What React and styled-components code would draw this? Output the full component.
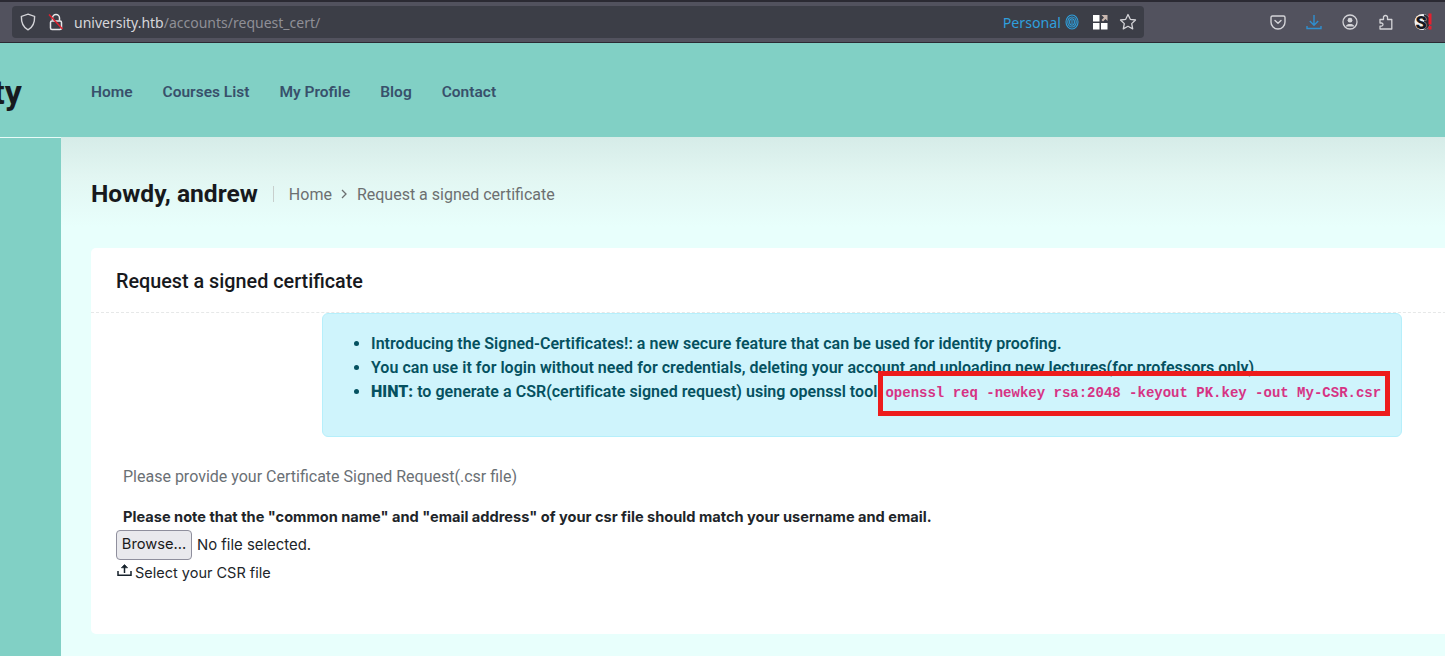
import React from 'react';
import styled, { createGlobalStyle } from 'styled-components';

const GlobalStyle = createGlobalStyle`
  html, body {
    margin: 0;
    height: 100%;
    overflow: hidden;
    background: #e8fffc;
  }
  * {
    box-sizing: border-box;
  }
  body {
    font-family: Roboto, "Liberation Sans", sans-serif;
  }
`;

const Page = styled.div`
  width: 1445px;
  height: 656px;
  overflow: hidden;
  display: flex;
  flex-direction: column;
`;

/* browser chrome */
const Toolbar = styled.div`
  height: 43px;
  flex: none;
  display: flex;
  align-items: center;
  padding: 0 13px 0 12px;
  background: #52525e;
  border-top: 2px solid #2b2a33;
  border-bottom: 1px solid #2b2a33;
`;

const UrlBar = styled.div`
  width: 1132px;
  height: 32px;
  flex: none;
  display: flex;
  align-items: center;
  padding: 0 7px 0 8px;
  background: #3c3e47;
  border-radius: 4px;
`;

const UrlIcon = styled.span`
  display: flex;
  flex: none;
  width: ${(p) => p.$w || 20}px;
  margin-left: ${(p) => p.$ml || 0}px;
  margin-right: ${(p) => p.$mr || 0}px;
  justify-content: center;
`;

const UrlText = styled.div`
  font-family: "Noto Sans", sans-serif;
  font-size: 14px;
  color: #d6d6da;
  span {
    color: #8f8f96;
  }
`;

const Personal = styled.div`
  margin-left: auto;
  display: flex;
  align-items: center;
  gap: 4px;
  font-family: "Noto Sans", sans-serif;
  font-size: 14.2px;
  color: #2f9fdc;
`;

const ToolIcons = styled.div`
  margin-left: auto;
  display: flex;
  align-items: center;
  gap: 20px;
`;

/* site header */
const Header = styled.header`
  height: 94px;
  flex: none;
  display: flex;
  align-items: center;
  padding-top: 3px;
  background: #81d0c5;
`;

const LogoClip = styled.div`
  width: 22px;
  margin-right: 69px;
  overflow: hidden;
  display: flex;
  justify-content: flex-end;
  font-size: 34px;
  font-weight: 700;
  color: #171a1f;
  white-space: nowrap;
`;

const Nav = styled.nav`
  display: flex;
  gap: 30px;
`;

const NavLink = styled.a`
  font-size: 15.5px;
  font-weight: 600;
  font-family: Roboto, sans-serif;
  color: #38506b;
`;

const Body = styled.div`
  flex: 1;
  display: flex;
`;

const Sidebar = styled.aside`
  width: 61px;
  flex: none;
  background: #81d0c5;
  border-top: 1px solid #e8fbf8;
`;

const Main = styled.main`
  flex: 1;
  padding: 41px 0 0 30px;
  background: linear-gradient(180deg, #d6ece8 0, #e2f6f2 40px, #e8fffc 90px);
`;

const PageHead = styled.div`
  display: flex;
  align-items: center;
  height: 32px;
`;

const Howdy = styled.h1`
  margin: 0;
  font-size: 24.6px;
  font-weight: 700;
  color: #17191d;
  line-height: 32px;
`;

const Crumbs = styled.div`
  margin-left: 15px;
  padding-left: 15px;
  display: flex;
  align-items: center;
  gap: 8px;
  height: 16px;
  font-size: 16px;
  color: #6c6f70;
  border-left: 1px solid #c8cfcd;
`;

const Card = styled.section`
  width: 1380px;
  height: 386px;
  margin-top: 38px;
  background: #fff;
  border-radius: 5px;
`;

const CardHead = styled.div`
  height: 65px;
  display: flex;
  align-items: center;
  padding: 2px 25px 0;
  border-bottom: 1px dashed #e6e8e8;
`;

const CardTitle = styled.h2`
  margin: 0;
  font-size: 19.8px;
  font-weight: 500;
  color: #17191d;
`;

const Alert = styled.div`
  width: 1080px;
  height: 124px;
  margin: 0 0 0 231px;
  padding: 18px 0 0 0;
  background: #cff4fc;
  border: 1px solid #b6effb;
  border-radius: 6px;
  color: #055160;
`;

const AlertList = styled.ul`
  margin: 0;
  padding: 0 0 0 48px;
`;

const AlertItem = styled.li`
  font-size: 16px;
  font-weight: 600;
  line-height: 24px;
  letter-spacing: 0.03px;
`;

const Code = styled.code`
  position: relative;
  display: inline-block;
  margin-left: 4px;
  font-family: "Liberation Mono", monospace;
  font-size: 14px;
  font-weight: 700;
  letter-spacing: 0;
  color: #d63384;
  line-height: 24px;

  /* red annotation box drawn over the screenshot */
  &::after {
    content: '';
    position: absolute;
    top: -10px;
    left: -7px;
    right: -9px;
    bottom: -11px;
    border: 5px solid #ed1c1c;
  }
`;

const Form = styled.div`
  padding: 28px 0 0 25px;
`;

const ProvideText = styled.p`
  margin: 0 0 0 7px;
  font-size: 16px;
  line-height: 24px;
  color: #6a7075;
`;

const NoteText = styled.p`
  margin: 17px 0 0 7px;
  font-family: Inter, sans-serif;
  font-size: 14.6px;
  font-weight: 700;
  line-height: 22px;
  color: #212529;
`;

const FileRow = styled.div`
  display: flex;
  align-items: center;
  gap: 5px;
  height: 30px;
  margin-top: 2px;
  padding-bottom: 1px;
  font-family: Inter, sans-serif;
  font-size: 14.9px;
  color: #212529;
`;

const BrowseButton = styled.button`
  width: 76px;
  height: 30px;
  padding: 0 0 2px;
  margin-bottom: -1px;
  font-family: Inter, sans-serif;
  font-size: 14.7px;
  color: #1a1a1a;
  background: #e9e9ed;
  border: 1px solid #8f8f9d;
  border-radius: 4px;
`;

const SelectLabel = styled.label`
  display: flex;
  align-items: flex-start;
  gap: 3px;
  margin-top: 2px;
  font-family: Inter, sans-serif;
  font-size: 14.5px;
  line-height: 22px;
  color: #212529;
  svg {
    margin: 1px 0 0 1px;
  }
`;

const ShieldIcon = () => (
  <svg width="16" height="18" viewBox="0 0 16 18" fill="none" stroke="#d4d4d8" strokeWidth="1.4">
    <path d="M8 1.2 14.6 3.4c.2 6-1.4 10.6-6.6 13.4C2.8 14 1.200 9.400 1.400 3.400Z" />
  </svg>
);

const LockIcon = () => (
  <svg width="16" height="18" viewBox="0 0 16 18" fill="none">
    <path d="M4.500 7.500V5a3.500 3.500 0 0 1 7 0v2.500" stroke="#e8e8ea" strokeWidth="1.500" />
    <rect x="2.500" y="8" width="11" height="8.500" rx="1.500" stroke="#e8e8ea" strokeWidth="1.500" />
    <path d="M1 1.500 14.500 16" stroke="#e5202e" strokeWidth="1.500" />
  </svg>
);

const FingerprintIcon = () => (
  <svg width="14" height="16" viewBox="0 0 14 16" fill="none" stroke="#2f9fdc" strokeWidth="1.100">
    <ellipse cx="7" cy="8" rx="6" ry="7" />
    <ellipse cx="7" cy="8" rx="4.200" ry="5" />
    <ellipse cx="7" cy="8" rx="2.400" ry="3.200" />
    <path d="M7 5.800v4.400" />
  </svg>
);

const ContainersIcon = () => (
  <svg width="16" height="16" viewBox="0 0 16 16">
    <rect x="1" y="1" width="6.500" height="6.500" fill="#fff" />
    <rect x="1" y="9" width="6.500" height="6.500" fill="#fff" />
    <rect x="9" y="9" width="6.500" height="6.500" fill="#fff" />
    <path d="M9.500 1H15.500V7L13.500 5 11 7.500 9.500 6 12 3.500Z" fill="#c9b8b0" />
  </svg>
);

const StarIcon = () => (
  <svg width="18" height="18" viewBox="0 0 18 18" fill="none" stroke="#d4d4d8" strokeWidth="1.300" strokeLinejoin="round">
    <path d="M9 1.500 11.300 6.300 16.500 7 12.700 10.600 13.700 15.900 9 13.300 4.300 15.900 5.300 10.600 1.500 7 6.700 6.300Z" />
  </svg>
);

const PocketIcon = () => (
  <svg width="16" height="16" viewBox="0 0 16 16" fill="none" stroke="#d4d4d8" strokeWidth="1.400" strokeLinecap="round" strokeLinejoin="round">
    <path d="M2.500 2h11A1.500 1.500 0 0 1 15 3.500V8a7 7 0 0 1-14 0V3.500A1.500 1.500 0 0 1 2.500 2Z" />
    <path d="M5 6.500 8 9.300 11 6.500" />
  </svg>
);

const DownloadIcon = () => (
  <svg width="16" height="16" viewBox="0 0 16 16" fill="none" stroke="#2f8fd0" strokeWidth="1.400">
    <path d="M8 1v10M3.800 7 8 11.200 12.200 7M1 12v2.500h14V12" />
  </svg>
);

const AccountIcon = () => (
  <svg width="16" height="16" viewBox="0 0 16 16" fill="none" stroke="#d4d4d8" strokeWidth="1.300">
    <circle cx="8" cy="8" r="7" />
    <circle cx="8" cy="6.200" r="2.400" fill="#d4d4d8" stroke="none" />
    <path d="M3.500 12.500c1-2 2.500-2.500 4.500-2.500s3.500.5 4.500 2.500Z" fill="#d4d4d8" stroke="none" />
  </svg>
);

const PuzzleIcon = () => (
  <svg width="16" height="16" viewBox="0 0 16 16" fill="none" stroke="#d4d4d8" strokeWidth="1.300" strokeLinejoin="round">
    <path d="M5 15H13.800V5.500H9.500V4a2 2 0 0 0-2-2.500A2 2 0 0 0 5.500 4v1.500H2V9h1.500a1.600 1.600 0 0 1 1.500 1.600 1.600 1.600 0 0 1-1.500 1.600H2V15Z" />
  </svg>
);

const ShodanIcon = () => (
  <svg width="18" height="18" viewBox="0 0 18 18">
    <circle cx="8.500" cy="9" r="8" fill="#f2f2f2" />
    <path d="M10 1.200a8 8 0 0 1 0 15.600Z" fill="#2b2d38" />
    <text x="1.500" y="15.500" fontFamily="Roboto, sans-serif" fontSize="18" fontWeight="900" fill="#16181f" stroke="#f2f2f2" strokeWidth="0.600" paintOrder="stroke">S</text>
    <rect x="14.500" y="0.500" width="3" height="11" fill="#e5202e" />
    <rect x="14.500" y="13" width="3" height="3.500" fill="#e5202e" />
  </svg>
);

const UploadIcon = () => (
  <svg width="15" height="14" viewBox="0 0 15 14" fill="none" stroke="#16212b" strokeWidth="1.500">
    <path d="M7.500 10V2.500" />
    <path d="M4.300 4.800 7.500 1.500l3.200 3.300Z" fill="#16212b" strokeWidth="0.600" />
    <path d="M1 8v4.300h13V8" />
  </svg>
);

const ChevronIcon = () => (
  <svg width="9" height="10" viewBox="0 0 9 10" fill="none" stroke="#6c6f70" strokeWidth="1.300">
    <path d="M2 1 6 5 2 9" />
  </svg>
);

const navItems = ['Home', 'Courses List', 'My Profile', 'Blog', 'Contact'];

export default function App() {
  return (
    <Page>
      <GlobalStyle />
      <Toolbar>
        <UrlBar>
          <UrlIcon $w={16}><ShieldIcon /></UrlIcon>
          <UrlIcon $w={16} $ml={12} $mr={10}><LockIcon /></UrlIcon>
          <UrlText>university.htb<span>/accounts/request_cert/</span></UrlText>
          <Personal>Personal <FingerprintIcon /></Personal>
          <UrlIcon $w={16} $ml={13}><ContainersIcon /></UrlIcon>
          <UrlIcon $w={18} $ml={11}><StarIcon /></UrlIcon>
        </UrlBar>
        <ToolIcons>
          <PocketIcon />
          <DownloadIcon />
          <AccountIcon />
          <PuzzleIcon />
          <ShodanIcon />
        </ToolIcons>
      </Toolbar>
      <Header>
        <LogoClip>University</LogoClip>
        <Nav>
          {navItems.map((item) => (
            <NavLink key={item}>{item}</NavLink>
          ))}
        </Nav>
      </Header>
      <Body>
        <Sidebar />
        <Main>
          <PageHead>
            <Howdy>Howdy, andrew</Howdy>
            <Crumbs>
              Home <ChevronIcon /> Request a signed certificate
            </Crumbs>
          </PageHead>
          <Card>
            <CardHead>
              <CardTitle>Request a signed certificate</CardTitle>
            </CardHead>
            <Alert>
              <AlertList>
                <AlertItem>Introducing the Signed-Certificates!: a new secure feature that can be used for identity proofing.</AlertItem>
                <AlertItem>You can use it for login without need for credentials, deleting your account and uploading new lectures(for professors only).</AlertItem>
                <AlertItem>
                  <strong>HINT:</strong> to generate a CSR(certificate signed request) using openssl tool{' '}
                  <Code>openssl req -newkey rsa:2048 -keyout PK.key -out My-CSR.csr</Code>
                </AlertItem>
              </AlertList>
            </Alert>
            <Form>
              <ProvideText>Please provide your Certificate Signed Request(.csr file)</ProvideText>
              <NoteText>Please note that the "common name" and "email address" of your csr file should match your username and email.</NoteText>
              <FileRow>
                <BrowseButton type="button">Browse...</BrowseButton>
                No file selected.
              </FileRow>
              <SelectLabel><UploadIcon /> Select your CSR file</SelectLabel>
            </Form>
          </Card>
        </Main>
      </Body>
    </Page>
  );
}
